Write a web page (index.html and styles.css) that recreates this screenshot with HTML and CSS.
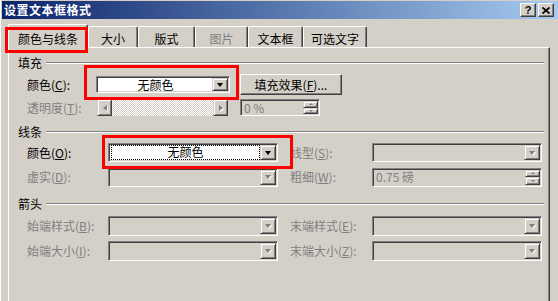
FILE: index.html
```html
<!DOCTYPE html>
<html lang="zh-CN">
<head>
    <meta charset="UTF-8">
    <title>设置文本框格式</title>
    <link rel="stylesheet" href="styles.css">
</head>
<body>
    <div class="dialog">
        <div class="titlebar">
            <span class="title">设置文本框格式</span>
            <div class="caption-btns">
                <span class="cap-btn">?</span>
                <span class="cap-btn">
                    <svg width="8" height="7" viewBox="0 0 8 7"><path d="M0.5 0.5L7.5 6.5M7.5 0.5L0.5 6.5" stroke="#000" stroke-width="1.7"/></svg>
                </span>
            </div>
        </div>

        <div class="content">
            <div class="tabs">
                <div class="tab active mark mark-tab">颜色与线条</div>
                <div class="tab">大小</div>
                <div class="tab">版式</div>
                <div class="tab off">图片</div>
                <div class="tab">文本框</div>
                <div class="tab">可选文字</div>
            </div>

            <div class="panel">
                <div class="group-title">填充</div>
                <div class="row row-fill-color">
                    <span class="label fill-label">颜色(<u>C</u>):</span>
                    <div class="combo fill-combo mark mark-fill">
                        <span class="combo-text">无颜色</span>
                        <span class="drop"><i class="arrow"></i></span>
                    </div>
                    <div class="btn">填充效果(<u>F</u>)...</div>
                </div>
                <div class="row row-alpha">
                    <span class="label alpha-label off">透明度(<u>T</u>):</span>
                    <div class="slider">
                        <span class="sbtn"><i class="arrow-left"></i></span>
                        <span class="track"></span>
                        <span class="sbtn"><i class="arrow-right"></i></span>
                    </div>
                    <div class="combo spin alpha-spin off">
                        <span class="spin-text">0 %</span>
                        <span class="spin-btns">
                            <span class="spin-btn"><i class="tri-up"></i></span>
                            <span class="spin-btn"><i class="tri-down"></i></span>
                        </span>
                    </div>
                </div>

                <div class="group-title spaced">线条</div>
                <div class="row row-line-color">
                    <span class="label">颜色(<u>O</u>):</span>
                    <div class="combo wide mark mark-line">
                        <span class="combo-text focus">无颜色</span>
                        <span class="drop"><i class="arrow"></i></span>
                    </div>
                    <span class="label right-label off">线型(<u>S</u>):</span>
                    <div class="combo wide off">
                        <span class="combo-text"></span>
                        <span class="drop"><i class="arrow"></i></span>
                    </div>
                </div>
                <div class="row row-dash">
                    <span class="label off">虚实(<u>D</u>):</span>
                    <div class="combo wide off">
                        <span class="combo-text"></span>
                        <span class="drop"><i class="arrow"></i></span>
                    </div>
                    <span class="label right-label off">粗细(<u>W</u>):</span>
                    <div class="combo spin wide off">
                        <span class="spin-text">0.75 磅</span>
                        <span class="spin-btns">
                            <span class="spin-btn"><i class="tri-up"></i></span>
                            <span class="spin-btn"><i class="tri-down"></i></span>
                        </span>
                    </div>
                </div>

                <div class="group-title spaced">箭头</div>
                <div class="row row-begin-style">
                    <span class="label off">始端样式(<u>B</u>):</span>
                    <div class="combo wide tall off">
                        <span class="combo-text"></span>
                        <span class="drop"><i class="arrow"></i></span>
                    </div>
                    <span class="label right-label off">末端样式(<u>E</u>):</span>
                    <div class="combo wide tall off">
                        <span class="combo-text"></span>
                        <span class="drop"><i class="arrow"></i></span>
                    </div>
                </div>
                <div class="row row-begin-size">
                    <span class="label off">始端大小(<u>I</u>):</span>
                    <div class="combo wide tall off">
                        <span class="combo-text"></span>
                        <span class="drop"><i class="arrow"></i></span>
                    </div>
                    <span class="label right-label off">末端大小(<u>Z</u>):</span>
                    <div class="combo wide tall off">
                        <span class="combo-text"></span>
                        <span class="drop"><i class="arrow"></i></span>
                    </div>
                </div>
            </div>
        </div>
    </div>
</body>
</html>
```

FILE: styles.css
```css
* {
    box-sizing: border-box;
}
body {
    margin: 0;
    background: #d4d0c8;
    font-family: "Noto Sans CJK SC", "Liberation Sans", sans-serif;
    font-size: 12px;
    color: #000;
}
u {
    text-decoration: underline;
    text-underline-offset: 1px;
}
.dialog {
    width: 558px;
    height: 301px;
    overflow: hidden;
    background: #d4d0c8;
    border-left: 1px solid #fff;
    padding: 1px 0 0 1px;
}

/* title bar */
.titlebar {
    height: 18px;
    display: flex;
    align-items: center;
    justify-content: space-between;
    padding: 0 4px 0 2px;
    background: linear-gradient(to right, #0a246a, #a6caf0);
}
.title {
    color: #fff;
    font-weight: bold;
    font-size: 12px;
    letter-spacing: 0.5px;
    line-height: 18px;
}
.caption-btns {
    display: flex;
    gap: 2px;
}
.cap-btn {
    width: 16px;
    height: 14px;
    display: flex;
    align-items: center;
    justify-content: center;
    background: #d4d0c8;
    border: 1px solid;
    border-color: #fff #404040 #404040 #fff;
    box-shadow: inset -1px -1px #808080;
    font-family: "Liberation Sans", sans-serif;
    font-weight: bold;
    font-size: 11px;
    line-height: 12px;
}

/* tabs */
.content {
    padding: 5px 0 0 6px;
}
.tabs {
    display: flex;
    align-items: flex-end;
    height: 23px;
}
.tab {
    height: 21px;
    padding-top: 2px;
    line-height: 19px;
    text-align: center;
    background: #d4d0c8;
    border-top: 1px solid #fff;
    border-left: 1px solid #fff;
    border-right: 1px solid #404040;
    box-shadow: inset -1px 0 #808080;
    border-radius: 2px 2px 0 0;
}
.tab:nth-child(1) { width: 80px; }
.tab:nth-child(2) { width: 50px; }
.tab:nth-child(3) { width: 57px; }
.tab:nth-child(4) { width: 53px; }
.tab:nth-child(5) { width: 55px; }
.tab:nth-child(6) { width: 64px; }
.tab.active {
    height: 24px;
    padding-top: 4px;
    margin-bottom: -1px;
    z-index: 2;
}
.off {
    color: #808080;
}

/* red highlight boxes */
.mark {
    position: relative;
}
.mark::after {
    content: "";
    position: absolute;
    border: 3px solid #f00;
    pointer-events: none;
    z-index: 3;
}
.mark-tab::after {
    top: 2px;
    left: -4px;
    right: -1px;
    bottom: -5px;
}
.mark-fill::after {
    top: -12px;
    left: -13px;
    right: -10px;
    bottom: -8px;
}
.mark-line::after {
    top: -9px;
    left: -7px;
    right: -16px;
    bottom: -8px;
}

/* panel */
.panel {
    width: 542px;
    height: 260px;
    padding: 7px 5px 0 9px;
    border-top: 1px solid #fff;
    border-left: 1px solid #fff;
    border-right: 1px solid #404040;
    box-shadow: inset -1px 0 #808080;
}
.group-title {
    display: flex;
    align-items: center;
    height: 15px;
    line-height: 15px;
}
.group-title::after {
    content: "";
    flex: 1;
    margin: 1px 0 0 4px;
    border-top: 1px solid #808080;
    border-bottom: 1px solid #fff;
}
.group-title.spaced {
    margin-top: 8px;
}
.row {
    display: flex;
    align-items: center;
    padding-left: 9px;
}
.row-fill-color { height: 29px; }
.row-alpha { height: 17px; }
.row-line-color { height: 27px; }
.row-dash { height: 22px; }
.row-begin-style { height: 30px; }
.row-begin-size { height: 20px; }

.label {
    width: 81px;
    white-space: nowrap;
    line-height: 14px;
}
.fill-label { width: 69px; }
.alpha-label { width: 70px; }
.right-label {
    width: 82px;
    margin-left: 12px;
}

/* combo boxes */
.combo {
    display: flex;
    height: 19px;
    padding: 1px;
    background: #fff;
    border: 1px solid;
    border-color: #808080 #fff #fff #808080;
    box-shadow: inset 1px 1px #404040, inset -1px -1px #d4d0c8;
}
.combo.off {
    background: #d4d0c8;
}
.fill-combo {
    width: 134px;
    height: 17px;
}
.wide { width: 170px; }
.tall { height: 20px; }
.combo-text {
    flex: 1;
    margin-left: 1px;
    text-align: center;
    line-height: 14px;
    white-space: nowrap;
}
.combo-text.focus {
    outline: 1px dotted #000;
    outline-offset: -1px;
}
.drop, .sbtn, .spin-btn {
    display: flex;
    align-items: center;
    justify-content: center;
    background: #d4d0c8;
    border: 1px solid;
    border-color: #d4d0c8 #404040 #404040 #d4d0c8;
    box-shadow: inset 1px 1px #fff, inset -1px -1px #808080;
}
.drop {
    width: 16px;
}
.arrow, .arrow-left, .arrow-right, .tri-up, .tri-down {
    display: block;
    width: 1px;
    height: 0;
}
.arrow {
    border-left: 3px solid transparent;
    border-right: 3px solid transparent;
    border-top: 4px solid #000;
}
.off .arrow {
    border-top-color: #808080;
    filter: drop-shadow(1px 1px 0 #fff);
}

/* fill effects button */
.btn {
    width: 102px;
    height: 21px;
    margin-left: 10px;
    line-height: 19px;
    text-align: center;
    background: #d4d0c8;
    border: 1px solid;
    border-color: #fff #404040 #404040 #fff;
    box-shadow: inset -1px -1px #808080;
    white-space: nowrap;
}

/* transparency slider */
.slider {
    display: flex;
    width: 131px;
    height: 17px;
}
.sbtn {
    width: 15px;
}
.track {
    flex: 1;
    background: repeating-conic-gradient(#fff 0 25%, #d4d0c8 0 50%) 0 0 / 2px 2px;
}
.arrow-left, .arrow-right {
    width: 0;
    height: 1px;
    border-top: 3px solid transparent;
    border-bottom: 3px solid transparent;
    filter: drop-shadow(1px 1px 0 #fff);
}
.arrow-left {
    border-right: 4px solid #808080;
}
.arrow-right {
    border-left: 4px solid #808080;
}

/* spin boxes */
.spin {
    align-items: stretch;
}
.alpha-spin {
    width: 80px;
    height: 17px;
    margin-left: 12px;
}
.spin-text {
    flex: 1;
    padding-left: 2px;
    line-height: 13px;
    white-space: nowrap;
}
.spin-btns {
    display: flex;
    flex-direction: column;
    width: 15px;
}
.spin-btn {
    flex: 1;
}
.tri-up {
    border-left: 2px solid transparent;
    border-right: 2px solid transparent;
    border-bottom: 2px solid #808080;
}
.tri-down {
    border-left: 2px solid transparent;
    border-right: 2px solid transparent;
    border-top: 2px solid #808080;
}
```
